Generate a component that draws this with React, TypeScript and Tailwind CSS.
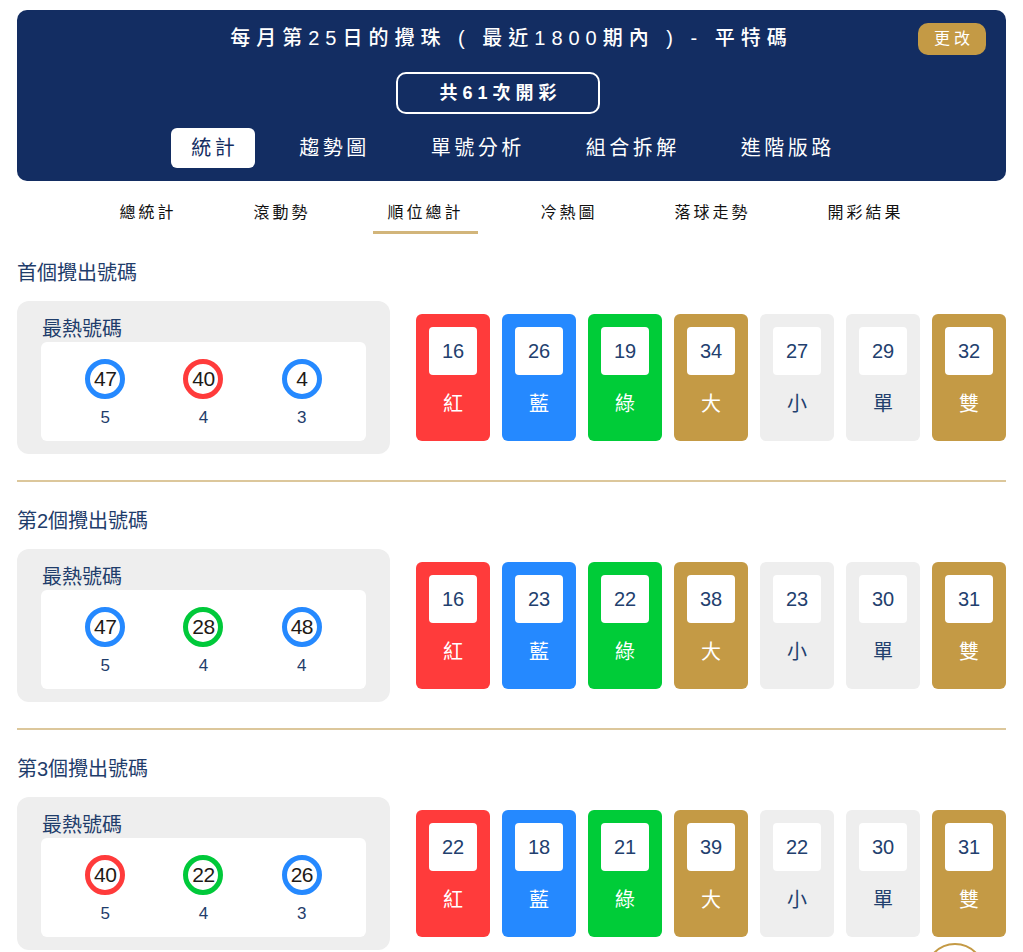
import React from 'react';

const FONT = { fontFamily: '"Liberation Sans", "Noto Sans CJK TC", sans-serif' };

type Ball = { n: number; c: 'red' | 'blue' | 'green' };

interface Section {
  title: string;
  balls: Ball[];
  counts: number[];
  stats: number[];
}

const sections: Section[] = [
  {
    title: '首個攪出號碼',
    balls: [{ n: 47, c: 'blue' }, { n: 40, c: 'red' }, { n: 4, c: 'blue' }],
    counts: [5, 4, 3],
    stats: [16, 26, 19, 34, 27, 29, 32],
  },
  {
    title: '第2個攪出號碼',
    balls: [{ n: 47, c: 'blue' }, { n: 28, c: 'green' }, { n: 48, c: 'blue' }],
    counts: [5, 4, 4],
    stats: [16, 23, 22, 38, 23, 30, 31],
  },
  {
    title: '第3個攪出號碼',
    balls: [{ n: 40, c: 'red' }, { n: 22, c: 'green' }, { n: 26, c: 'blue' }],
    counts: [5, 4, 3],
    stats: [22, 18, 21, 39, 22, 30, 31],
  },
];

const ballBorder = {
  red: 'border-[#ff3b3b]',
  blue: 'border-[#2589ff]',
  green: 'border-[#00c93a]',
};

const statBoxes = [
  { label: '紅', bg: 'bg-[#ff3b3b]', fg: 'text-white' },
  { label: '藍', bg: 'bg-[#2589ff]', fg: 'text-white' },
  { label: '綠', bg: 'bg-[#00cc38]', fg: 'text-white' },
  { label: '大', bg: 'bg-[#c49a45]', fg: 'text-white' },
  { label: '小', bg: 'bg-[#eeeeee]', fg: 'text-[#22406e]' },
  { label: '單', bg: 'bg-[#eeeeee]', fg: 'text-[#22406e]' },
  { label: '雙', bg: 'bg-[#c49a45]', fg: 'text-white' },
];

const mainTabs = ['統計', '趨勢圖', '單號分析', '組合拆解', '進階版路'];
const subTabs = ['總統計', '滾動勢', '順位總計', '冷熱圖', '落球走勢', '開彩結果'];

function Header() {
  return (
    <div className="relative mx-[17px] mt-[10px] rounded-[10px] bg-[#132d62] pb-[13px] pt-[14px] text-white">
      <div className="text-center text-[20px] font-medium leading-[28px] tracking-[6px]">
        每月第25日的攪珠 ( 最近1800期內 ) - 平特碼
      </div>
      <button className="absolute right-[20px] top-[13px] h-[32px] w-[68px] rounded-[10px] bg-[#c49a45] pl-[4px] text-[16px] tracking-[4px] text-white">
        更改
      </button>
      <div className="mr-[27px] mt-[20px] flex justify-center">
        <div className="flex h-[42px] w-[204px] items-center justify-center rounded-[10px] border-2 border-white pl-[5px] text-[18px] font-bold tracking-[5px]">
          共61次開彩
        </div>
      </div>
      <div className="mt-[14px] flex justify-center gap-6">
        {mainTabs.map((t, i) => (
          <div
            key={t}
            className={`flex h-[40px] items-center rounded-md pl-5 pr-[17px] text-[20px] tracking-[3.5px] ${
              i === 0 ? 'bg-white text-[#132d62]' : 'text-white'
            }`}
          >
            {t}
          </div>
        ))}
      </div>
    </div>
  );
}

function SubTabs() {
  return (
    <div className="mt-[20px] flex justify-center gap-[49px]">
      {subTabs.map((t, i) => (
        <div
          key={t}
          className={`border-b-[3px] px-[14px] pb-[6px] text-[16px] leading-[24px] tracking-[3px] text-[#111111] ${
            i === 2 ? 'border-[#d2b57a]' : 'border-transparent'
          }`}
        >
          {t}
        </div>
      ))}
    </div>
  );
}

function SectionBlock({ s, first }: { s: Section; first: boolean }) {
  return (
    <div className="mx-[17px]">
      {!first && <div className="mt-[26px] h-[2px] bg-[#dcc79b]" />}
      <div className="mt-[25px] text-[20px] leading-[28px] text-[#1f3d6b]">{s.title}</div>
      <div className="mt-[14px] flex items-center gap-[26px]">
        <div className="w-[373px] rounded-xl bg-[#eeeeee] px-6 pb-[13px] pt-[15px]">
          <div className="pl-[1px] text-[20px] leading-[26px] text-[#1f3d6b]">最熱號碼</div>
          <div className="grid grid-cols-3 rounded-md bg-white px-[15px] pb-[13px] pt-[17px]">
            {s.balls.map((b, i) => (
              <div key={i} className="flex flex-col items-center">
                <div
                  className={`flex h-[40px] w-[40px] items-center justify-center rounded-full border-[5px] bg-white text-[21px] tracking-[-0.5px] text-[#1e1a16] ${ballBorder[b.c]}`}
                >
                  {b.n}
                </div>
                <div className="mt-[9px] text-[17px] leading-[20px] text-[#1f3d6b]">{s.counts[i]}</div>
              </div>
            ))}
          </div>
        </div>
        <div className="flex gap-3">
          {statBoxes.map((b, i) => (
            <div key={b.label} className={`flex h-[127px] w-[74px] flex-col items-center rounded-md pt-[13px] ${b.bg}`}>
              <div className="flex h-[48px] w-[48px] items-center justify-center rounded bg-white text-[20px] text-[#22406e]">
                {s.stats[i]}
              </div>
              <div className={`mt-[16px] text-[20px] leading-[26px] ${b.fg}`}>{b.label}</div>
            </div>
          ))}
        </div>
      </div>
    </div>
  );
}

export default function App() {
  return (
    <div className="min-h-screen bg-white pb-[40px]" style={FONT}>
      <Header />
      <SubTabs />
      {sections.map((s, i) => (
        <SectionBlock key={s.title} s={s} first={i === 0} />
      ))}
      <div className="mx-[17px] mt-[26px] h-[2px] bg-[#dcc79b]" />
      <div className="fixed left-[925px] top-[943px] h-[60px] w-[60px] rounded-full border-2 border-[#c49a45] bg-white" />
    </div>
  );
}
